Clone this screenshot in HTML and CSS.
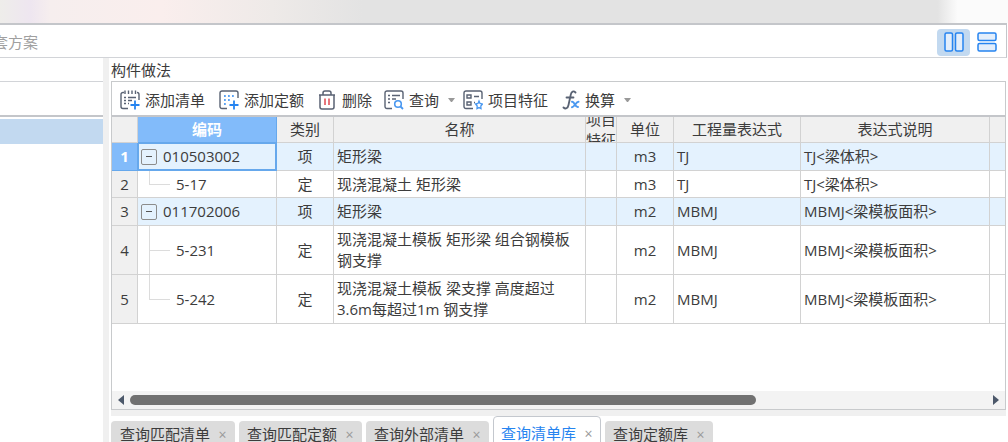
FILE: index.html
```html
<!DOCTYPE html>
<html lang="zh-CN">
<head>
<meta charset="utf-8">
<meta name="viewport" content="width=device-width, initial-scale=1">
<title>构件做法</title>
<link rel="stylesheet" href="styles.css">
</head>
<body>
<div class="app">
  <div class="backdrop"></div>
  <header class="topbar">
    <span class="scheme">套方案</span>
    <div class="views">
      <button class="view view-on" aria-label="左右布局"><svg width="20" height="20" viewBox="0 0 20 20" fill="#e3eefb" stroke="#2684f0" stroke-width="1.5"><rect x="1" y="1" width="7.5" height="18" rx="1.5"/><rect x="11.5" y="1" width="7.5" height="18" rx="1.5"/></svg></button>
      <button class="view" aria-label="上下布局"><svg width="20" height="20" viewBox="0 0 20 20" fill="#e3eefb" stroke="#2684f0" stroke-width="1.5"><rect x="1" y="1" width="18" height="7.5" rx="1.5"/><rect x="1" y="11.5" width="18" height="7.5" rx="1.5"/></svg></button>
    </div>
  </header>
  <div class="body">
    <aside class="side">
      <div class="side-title"></div>
      <div class="side-head"></div>
      <div class="side-selected"></div>
    </aside>
    <main class="main">
      <h1 class="title">构件做法</h1>
      <section class="panel">
        <div class="tools">
          <button class="tool"><svg width="20" height="20" viewBox="0 0 20 20" fill="none" stroke="#596273" stroke-width="1.4"><path d="M4 2.5H3A2 2 0 0 0 1 4.500V16.500A2 2 0 0 0 3 18.500H8M17 2.500Q19 2.500 19 4.500V10M5 .5V4M8.500 .5V4M12 .5V4M15.500 .5V4M4 7.500H6M8 7.500H16M4 10.500H6M8 10.500H12M4 13.500H6M8 13.500H9"/><path stroke="#2684f0" stroke-width="1.8" d="M15 10.500V19.500M10.500 15H19.500"/></svg>添加清单</button>
          <button class="tool"><svg width="20" height="20" viewBox="0 0 20 20" fill="none" stroke="#596273" stroke-width="1.4"><path d="M8 18.500H3A2 2 0 0 1 1 16.500V3A2 2 0 0 1 3 1H17A2 2 0 0 1 19 3V8"/><path stroke="#2684f0" stroke-dasharray="1.8 2.2" d="M5 6H15M5 10H11M5 14H9"/><path stroke="#2684f0" stroke-width="1.8" d="M15 10.500V19.500M10.500 15H19.500"/></svg>添加定额</button>
          <button class="tool tool-del"><svg width="18" height="20" viewBox="0 0 18 20" fill="none" stroke="#596273" stroke-width="1.5"><path d="M1 5H17M5 5V3A2 2 0 0 1 7 1H11A2 2 0 0 1 13 3V5M2 5V17A2 2 0 0 0 4 19H14A2 2 0 0 0 16 17V5"/><path stroke="#e04a50" d="M7 8.500V15M11 8.500V15"/></svg>删除</button>
          <button class="tool tool-menu"><svg width="20" height="20" viewBox="0 0 20 20" fill="none" stroke="#596273" stroke-width="1.4"><path d="M8 18.500H3A2 2 0 0 1 1 16.500V3A2 2 0 0 1 3 1H17A2 2 0 0 1 19 3V9M4 5.500H6M8 5.500H16M4 9H6M8 9H12M4 12.500H6"/><circle cx="14" cy="14" r="3.300" stroke="#4a98f0" stroke-width="1.600"/><path d="M16.500 16.500L19 19" stroke="#4a98f0" stroke-width="1.800"/></svg>查询<span class="caret"></span></button>
          <button class="tool"><svg width="20" height="20" viewBox="0 0 20 20" fill="none" stroke="#596273" stroke-width="1.4"><path d="M10 18.500H3A2 2 0 0 1 1 16.500V3A2 2 0 0 1 3 1H17A2 2 0 0 1 19 3V9M4 5H8V8H4ZM4 12H8V15H4ZM11 6.500H16M11 12.500H12"/><path stroke="#4a98f0" stroke-width="1.300" d="M16 11L17 13.500L19.500 14L17.800 16L18 18.600L16 17.600L14 18.600L14.200 16L12.500 14L15 13.500Z"/></svg>项目特征</button>
          <button class="tool tool-menu"><svg width="18" height="20" viewBox="0 0 18 20" fill="none" stroke="#596273" stroke-width="1.800" stroke-linecap="round"><path d="M13.500 2.500C11.500 .5 9.500 1.500 8.800 4.500L6.500 15C5.800 18.500 3.500 19.500 1.500 17.500M4.500 7.500H11.500"/><path stroke="#4a98f0" stroke-width="2" d="M10 11.800C12.500 11 13 17.500 16 17M16.500 11.800C14 11.800 12.500 17 10 17.200"/></svg>换算<span class="caret"></span></button>
        </div>
        <div class="grid-area">
          <table class="grid">
            <colgroup><col class="w-num"><col class="w-code"><col class="w-short"><col class="w-name"><col class="w-feat"><col class="w-short"><col class="w-expr"><col class="w-desc"><col></colgroup>
            <thead><tr><th></th><th class="h-on">编码</th><th>类别</th><th>名称</th><th><div class="clip">项目特征</div></th><th>单位</th><th>工程量表达式</th><th>表达式说明</th><th></th></tr></thead>
            <tbody>
              <tr class="item"><th class="n-on">1</th><td class="current"><div class="code"><button class="fold" aria-label="折叠"></button>010503002</div></td><td class="mid">项</td><td>矩形梁</td><td></td><td class="mid">m3</td><td>TJ</td><td>TJ&lt;梁体积&gt;</td><td></td></tr>
              <tr><th>2</th><td class="child last">5-17</td><td class="mid">定</td><td>现浇混凝土 矩形梁</td><td></td><td class="mid">m3</td><td>TJ</td><td>TJ&lt;梁体积&gt;</td><td></td></tr>
              <tr class="item"><th>3</th><td><div class="code"><button class="fold" aria-label="折叠"></button>011702006</div></td><td class="mid">项</td><td>矩形梁</td><td></td><td class="mid">m2</td><td>MBMJ</td><td>MBMJ&lt;梁模板面积&gt;</td><td></td></tr>
              <tr class="tall"><th>4</th><td class="child">5-231</td><td class="mid">定</td><td>现浇混凝土模板 矩形梁 组合钢模板 钢支撑</td><td></td><td class="mid">m2</td><td>MBMJ</td><td>MBMJ&lt;梁模板面积&gt;</td><td></td></tr>
              <tr class="tall"><th>5</th><td class="child last">5-242</td><td class="mid">定</td><td>现浇混凝土模板 梁支撑 高度超过3.6m每超过1m 钢支撑</td><td></td><td class="mid">m2</td><td>MBMJ</td><td>MBMJ&lt;梁模板面积&gt;</td><td></td></tr>
            </tbody>
          </table>
        </div>
        <div class="scroll">
          <button class="arrow" aria-label="向左"><svg width="6" height="10" viewBox="0 0 6 10"><path d="M6 0V10L0 5Z" fill="#4c586a"/></svg></button>
          <div class="track"><div class="thumb"></div></div>
          <button class="arrow" aria-label="向右"><svg width="6" height="10" viewBox="0 0 6 10"><path d="M0 0V10L6 5Z" fill="#4c586a"/></svg></button>
        </div>
      </section>
      <div class="divider"></div>
      <nav class="tabs">
        <div class="tab"><button class="tab-name">查询匹配清单</button><button class="close" aria-label="关闭">×</button></div>
        <div class="tab"><button class="tab-name">查询匹配定额</button><button class="close" aria-label="关闭">×</button></div>
        <div class="tab"><button class="tab-name">查询外部清单</button><button class="close" aria-label="关闭">×</button></div>
        <div class="tab tab-on"><button class="tab-name">查询清单库</button><button class="close" aria-label="关闭">×</button></div>
        <div class="tab"><button class="tab-name">查询定额库</button><button class="close" aria-label="关闭">×</button></div>
      </nav>
    </main>
  </div>
</div>
</body>
</html>
```
FILE: styles.css
```css
* { box-sizing: border-box; }
body {
  margin: 0;
  color: #3c3c3c;
  font: 15px/21px "Open Sans", "Noto Sans CJK SC", sans-serif;
}
button {
  padding: 0;
  border: 0;
  background: none;
  color: inherit;
  font: inherit;
}
svg { display: block; flex: none; }
.app {
  display: flex;
  flex-direction: column;
  height: 100vh;
  overflow: hidden;
  background: #fff;
}
.backdrop {
  flex: 0 0 23px;
  background: linear-gradient(90deg, #eeedea 0, #eee6f0 3%, #f6eeee 5%, #faeeed 16%, #eeeae8 27%, #e3e3e3 36%, #e3e3e3 93%, #fbfbfb 95%);
}
.topbar {
  display: flex;
  flex: 0 0 35px;
  align-items: center;
  justify-content: space-between;
  margin-right: 1px;
  padding-top: 2px;
  padding-right: 3px;
  border-top: 2px solid #c4c6ca;
  border-right: 1px solid #c4c6ca;
  border-bottom: 1px solid #d2d4d8;
}
.scheme {
  display: flex;
  justify-content: flex-end;
  width: 38px;
  overflow: hidden;
  color: #a0a0a0;
  white-space: nowrap;
}
.views { display: flex; }
.view {
  display: flex;
  align-items: center;
  justify-content: center;
  width: 33px;
  height: 27px;
  border-radius: 4px;
}
.view-on { background: #c2d9f0; }
.body { display: flex; flex: 1; min-height: 0; }
.side { flex: 0 0 103px; }
.side-title { height: 24px; border-bottom: 1px solid #d2d4d8; }
.side-head { height: 35px; border-bottom: 2px solid #c4c6ca; }
.side-selected { height: 25px; margin-top: 2px; background: #c2d9f0; }
.main {
  display: flex;
  flex: 1;
  flex-direction: column;
  min-width: 0;
  padding-right: 2px;
  padding-left: 2px;
  border-left: 6px solid #f0f0f0;
}
.title { margin: 0; height: 23px; font-size: 15px; line-height: 25px; font-weight: 400; }
.panel {
  display: flex;
  flex: 1;
  flex-direction: column;
  min-height: 0;
  border: 1px solid #c8cacc;
}
.tools {
  display: flex;
  flex: 0 0 35px;
  align-items: center;
  gap: 8px;
  padding: 3px 8px 0;
  border-bottom: 2px solid #c4c6ca;
}
.tool { display: flex; align-items: center; gap: 5px; padding-right: 6px; white-space: nowrap; }
.tool-del { gap: 6px; padding-right: 4px; }
.tool-menu { padding-right: 0; }
.caret {
  width: 7px;
  margin-left: 4px;
  border: solid transparent;
  border-width: 4px 3px 0;
  border-top-color: #999;
}
.grid-area { flex: 1; min-height: 0; overflow: hidden; }
.grid {
  width: 100%;
  border-spacing: 0;
  table-layout: fixed;
}
.w-num { width: 26px; }
.w-code { width: 139px; }
.w-short { width: 57px; }
.w-name { width: 252px; }
.w-feat { width: 31px; }
.w-expr { width: 127px; }
.w-desc { width: 189px; }
.grid th, .grid td {
  height: 27px;
  padding: 0 3px;
  border-right: 1px solid #d2d2d2;
  border-bottom: 1px solid #d2d2d2;
  text-align: left;
}
.grid th { padding: 0; background: #f0f0f0; font-weight: 400; text-align: center; }
.grid thead th { height: 26px; }
.grid tr > :last-child { border-right: 0; }
.grid tbody tr:nth-child(1) > *, .grid tbody tr:nth-child(3) > * { height: 28px; }
.grid .tall > * { height: 49px; }
.grid tr .mid { text-align: center; }
.item td { background: #e4f2fe; }
.grid .h-on, .grid .n-on {
  border-color: #66a8ec;
  background: #82bbfa;
  color: #fff;
  font-weight: 700;
}
.clip { height: 25px; overflow: hidden; display: flex; align-items: center; }
.grid td.current { box-shadow: inset 0 0 0 1px #66a8ec; border-color: #66a8ec; }
.code { display: flex; align-items: center; gap: 6px; }
.fold {
  display: flex;
  align-items: center;
  justify-content: center;
  width: 16px;
  height: 16px;
  border: 1px solid #8c8c8c;
  border-radius: 2px;
}
.fold::before { width: 6px; height: 1px; background: #555; content: ""; }
.grid td.child { position: relative; padding-left: 38px; }
.child::before, .child::after {
  position: absolute;
  left: 11px;
  background: #dcdcdc;
  content: "";
}
.child::before { top: 0; bottom: 0; width: 1px; }
.child.last::before { bottom: 50%; }
.child::after { top: 50%; width: 21px; height: 1px; }
.scroll {
  display: flex;
  flex: 0 0 18px;
  align-items: center;
  gap: 6px;
  padding: 0 6px;
  background: #f3f3f3;
}
.track { flex: 1; }
.thumb { width: 73%; height: 10px; border-radius: 5px; background: #717171; }
.divider { flex: 0 0 6px; background: #f0f0f0; }
.tabs { display: flex; flex: 0 0 26px; align-items: flex-start; gap: 4px; min-height: 0; }
.tab {
  display: flex;
  align-items: center;
  gap: 8px;
  height: 27px;
  margin-top: 5px;
  padding: 0 8px;
  border-radius: 4px 4px 0 0;
  background: #dcdcdc;
  white-space: nowrap;
}
.tab:first-child { padding-left: 9px; }
.tab-on {
  height: 34px;
  margin-top: 0;
  padding: 0 7px;
  border: 1px solid #c4c8ce;
  background: #fff;
}
.tab-on .tab-name { color: #2684f0; }
.close { width: 9px; color: #999; font-size: 14px; }
```
